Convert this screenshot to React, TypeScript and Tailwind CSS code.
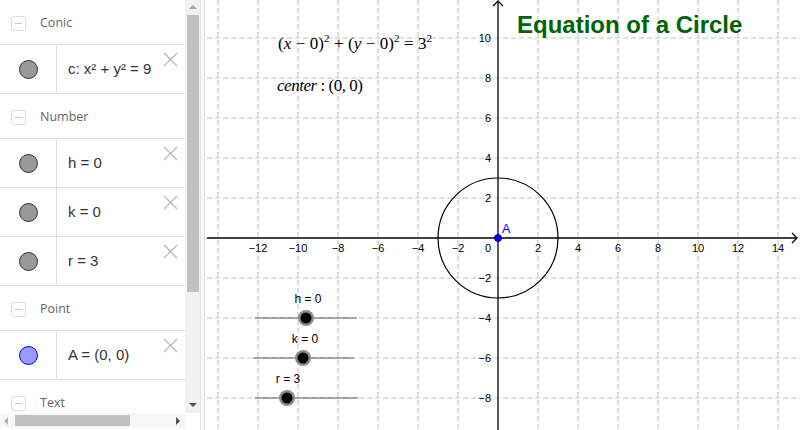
import React from "react";

const SANS = { fontFamily: '"Liberation Sans", Arial, sans-serif' };

type Item = { label: string; color: "gray" | "blue" };

const GROUPS: { title: string; items: Item[] }[] = [
  { title: "Conic", items: [{ label: "c: x² + y² = 9", color: "gray" }] },
  {
    title: "Number",
    items: [
      { label: "h = 0", color: "gray" },
      { label: "k = 0", color: "gray" },
      { label: "r = 3", color: "gray" },
    ],
  },
  { title: "Point", items: [{ label: "A = (0, 0)", color: "blue" }] },
  { title: "Text", items: [] },
];

function GroupHeader({ title }: { title: string }) {
  return (
    <div className="flex h-[45px] shrink-0 items-center border-b border-[#e0e0e0] pl-[11px] pt-[3px]">
      <div className="flex h-[15px] w-[15px] items-center justify-center rounded-[3px] border border-[#dcdcdc]">
        <div className="h-[1.5px] w-[7px] bg-[#c8c8c8]" />
      </div>
      <span
        className="ml-[14px] text-[12.5px] text-[#666]"
        style={{ fontFamily: '"Open Sans", sans-serif' }}
      >
        {title}
      </span>
    </div>
  );
}

function ItemRow({ item }: { item: Item }) {
  const marker =
    item.color === "blue"
      ? "bg-[#9a9aff] border-[#0000ff]"
      : "bg-[#999999] border-[#333333]";
  return (
    <div className="relative flex h-[49px] shrink-0 border-b border-[#e0e0e0]">
      <div className="flex w-[57px] shrink-0 items-center justify-center border-r border-[#e0e0e0]">
        <div className={`h-[19px] w-[19px] rounded-full border ${marker}`} />
      </div>
      <div className="flex items-center pl-[11px] text-[15px] text-[#333]" style={SANS}>
        {item.label}
      </div>
      {/* delete cross */}
      <svg className="absolute right-[7px] top-[7px]" width="15" height="15" viewBox="0 0 15 15">
        <path d="M1 1L14 14M14 1L1 14" stroke="#bbbbbb" strokeWidth="1.4" />
      </svg>
    </div>
  );
}

function Arrow({ dir, color }: { dir: "up" | "down" | "left" | "right"; color: string }) {
  const pts = {
    up: "1,6 5,2 9,6",
    down: "1,2 5,6 9,2",
    left: "6,1 2,5 6,9",
    right: "3,1 7,5 3,9",
  }[dir];
  return (
    <svg width="10" height="10" viewBox="0 0 10 10">
      <polygon points={pts} fill={color} />
    </svg>
  );
}

function AlgebraView() {
  return (
    <div className="flex w-[200px] shrink-0 flex-col">
      <div className="flex h-[413px]">
        <div className="flex w-[185px] flex-col overflow-hidden">
          {GROUPS.map((g) => (
            <React.Fragment key={g.title}>
              <GroupHeader title={g.title} />
              {g.items.map((it) => (
                <ItemRow key={it.label} item={it} />
              ))}
            </React.Fragment>
          ))}
        </div>
        {/* vertical scrollbar */}
        <div className="flex w-[15px] flex-col bg-[#f1f1f1]">
          <div className="flex h-[15px] items-center justify-center">
            <Arrow dir="up" color="#a3a3a3" />
          </div>
          <div className="mx-auto h-[277px] w-[12px] bg-[#c1c1c1]" />
          <div className="flex-1" />
          <div className="flex h-[15px] items-center justify-center">
            <Arrow dir="down" color="#505050" />
          </div>
        </div>
      </div>
      {/* horizontal scrollbar */}
      <div className="flex h-[15px]">
        <div className="flex w-[185px] items-center bg-[#f7f7f7]">
          <div className="flex w-[13px] justify-center">
            <Arrow dir="left" color="#b0b0b0" />
          </div>
          <div className="ml-[2px] h-[11px] w-[115px] bg-[#c1c1c1]" />
          <div className="flex-1" />
          <div className="flex w-[14px] justify-center">
            <Arrow dir="right" color="#505050" />
          </div>
        </div>
      </div>
    </div>
  );
}

const OX = 293;
const OY = 238;
const U = 20;

function GraphicsView() {
  const vx = [-7, -6, -5, -4, -3, -2, -1, 1, 2, 3, 4, 5, 6, 7];
  const hy = [5, 4, 3, 2, 1, -1, -2, -3, -4];
  const xLabels = [-6, -5, -4, -3, -2, -1, 1, 2, 3, 4, 5, 6, 7];
  const yLabels = [5, 4, 3, 2, 1, -1, -2, -3, -4];
  const fmt = (n: number) => (n < 0 ? `\u2212${-n}` : `${n}`);

  const sliders = [
    { label: "h = 0", x1: 50, x2: 152, y: 318, dot: 101, lx: 103 },
    { label: "k = 0", x1: 48, x2: 149, y: 358, dot: 98, lx: 100 },
    { label: "r = 3", x1: 50, x2: 153, y: 398, dot: 82, lx: 83 },
  ];

  return (
    <div className="relative flex-1 bg-white">
      <svg width="595" height="430" viewBox="0 0 595 430" className="block">
        {/* grid */}
        <g stroke="#c0c0c0" strokeWidth="1" strokeDasharray="5 3">
          {vx.map((k) => (
            <line key={`v${k}`} x1={OX + 2 * k * U} y1={0} x2={OX + 2 * k * U} y2={430} />
          ))}
          {hy.map((k) => (
            <line key={`h${k}`} x1={2} y1={OY - 2 * k * U} x2={595} y2={OY - 2 * k * U} />
          ))}
        </g>

        {/* axes */}
        <g stroke="#000" strokeWidth="1.3" fill="none">
          <line x1={2} y1={OY} x2={592} y2={OY} />
          <line x1={OX} y1={1} x2={OX} y2={430} />
          <path d={`M587 ${OY - 5}L592 ${OY}L587 ${OY + 5}`} />
          <path d={`M${OX - 5} 6L${OX} 1L${OX + 5} 6`} />
        </g>

        {/* axis labels */}
        <g fontSize="11" fill="#000" style={SANS}>
          {xLabels.map((k) => (
            <text key={`xl${k}`} x={OX + 2 * k * U} y={OY + 14} textAnchor="middle">
              {fmt(2 * k)}
            </text>
          ))}
          {yLabels.map((k) => (
            <text key={`yl${k}`} x={OX - 7} y={OY - 2 * k * U + 4} textAnchor="end">
              {fmt(2 * k)}
            </text>
          ))}
          <text x={OX - 7} y={OY + 14} textAnchor="end">
            0
          </text>
        </g>

        {/* circle c */}
        <circle cx={OX} cy={OY} r={3 * U} fill="none" stroke="#000" strokeWidth="1.2" />

        {/* point A */}
        <circle cx={OX} cy={OY} r={3.6} fill="#0000ff" stroke="#00008b" strokeWidth="0.8" />
        <text x={OX + 4} y={OY - 5} fontSize="12.5" fill="#0000ff" style={SANS}>
          A
        </text>

        {/* equation text */}
        <text
          x={73}
          y={49}
          fontSize="17"
          fill="#000"
          textLength="154"
          lengthAdjust="spacing"
          style={{ fontFamily: '"Liberation Serif", "Times New Roman", serif' }}
        >
          (<tspan fontStyle="italic">x</tspan> − 0)
          <tspan fontSize="11" dy="-7">2</tspan>
          <tspan dy="7"> + (</tspan>
          <tspan fontStyle="italic">y</tspan> − 0)
          <tspan fontSize="11" dy="-7">2</tspan>
          <tspan dy="7"> = 3</tspan>
          <tspan fontSize="11" dy="-7">2</tspan>
        </text>
        <text
          x={72}
          y={91}
          fontSize="17"
          fill="#000"
          textLength="86"
          lengthAdjust="spacing"
          style={{ fontFamily: '"Liberation Serif", "Times New Roman", serif' }}
        >
          <tspan fontStyle="italic">center</tspan> : (0, 0)
        </text>

        {/* title */}
        <text
          x={312}
          y={33}
          fontSize="24"
          fontWeight="bold"
          fill="#006400"
          style={SANS}
        >
          Equation of a Circle
        </text>

        {/* sliders */}
        {sliders.map((s) => (
          <g key={s.label}>
            <line x1={s.x1} y1={s.y} x2={s.x2} y2={s.y} stroke="#606060" strokeWidth="1" />
            <circle cx={s.dot} cy={s.y} r={8} fill="#8c8c8c" />
            <circle cx={s.dot} cy={s.y} r={5.5} fill="#000" />
            <text x={s.lx} y={s.y - 15} fontSize="12" textAnchor="middle" fill="#000" style={SANS}>
              {s.label}
            </text>
          </g>
        ))}
      </svg>
    </div>
  );
}

export default function App() {
  return (
    <div className="flex h-[430px] w-[800px] overflow-hidden bg-white">
      <AlgebraView />
      <div className="w-[5px] shrink-0 border-x border-[#e2e2e2] bg-[#f8f8f8]" />
      <GraphicsView />
    </div>
  );
}
